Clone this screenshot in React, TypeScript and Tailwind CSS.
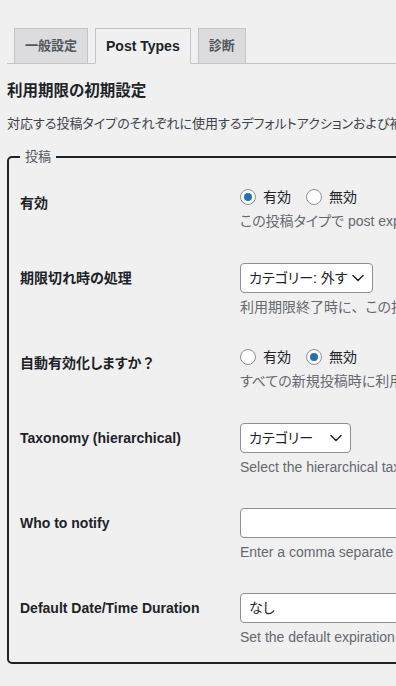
import React from "react";

const FONT = "font-['Liberation_Sans','Noto_Sans_CJK_JP',sans-serif] [font-feature-settings:'palt']";

function Full({ children }: { children: React.ReactNode }) {
  return <span className="[font-feature-settings:normal]">{children}</span>;
}

function Radio({ checked }: { checked: boolean }) {
  return (
    <span className="w-[16px] h-[16px] rounded-full border border-[#8c8f94] bg-white flex items-center justify-center shrink-0">
      {checked && <span className="w-[8px] h-[8px] rounded-full bg-[#2271b1]" />}
    </span>
  );
}

function RadioPair({ first }: { first: boolean }) {
  return (
    <div className="h-[20px] flex items-center text-[14px] text-[#1d2327]">
      <Radio checked={first} />
      <span className="ml-[7px] mr-[15px]">有効</span>
      <Radio checked={!first} />
      <span className="ml-[7px]">無効</span>
    </div>
  );
}

function Chevron() {
  return (
    <svg width="12" height="8" viewBox="0 0 12 8" className="shrink-0">
      <polyline points="1,1.5 6,6.5 11,1.5" fill="none" stroke="#1d2327" strokeWidth="1.5" strokeLinejoin="round" strokeLinecap="round" />
    </svg>
  );
}

function FakeSelect({ label, w }: { label: string; w: string }) {
  return (
    <div className={`${w} h-[30px] border border-[#8c8f94] rounded-[4px] bg-white flex items-center justify-between pl-[8px] pr-[8px] text-[14px] text-[#1d2327]`}>
      <span className="whitespace-nowrap">{label}</span>
      <Chevron />
    </div>
  );
}

function Desc({ children }: { children: React.ReactNode }) {
  return <div className="mt-[4px] leading-[20px] text-[14px] text-[#646970] whitespace-nowrap">{children}</div>;
}

function Row({ label, children, radio, last }: { label: React.ReactNode; children: React.ReactNode; radio?: boolean; last?: boolean }) {
  return (
    <div className="flex">
      <div className="w-[220px] shrink-0 pt-[20px] leading-[18px] text-[14px] font-bold text-[#1d2327] whitespace-nowrap">{label}</div>
      <div className={`${radio ? "pt-[13px] pb-[18px]" : last ? "pt-[14px] pb-[15px]" : "pt-[14px] pb-[17px]"}`}>{children}</div>
    </div>
  );
}

export default function App() {
  return (
    <div className={`w-[396px] h-[686px] overflow-hidden bg-[#f0f0f1] ${FONT}`}>
      <div className="w-[900px] pt-[28px]">
        <div className="ml-[7px] flex items-end border-b border-[#c3c4c7]">
          <div className="ml-[7px] -mb-px px-[10px] py-[5px] leading-[24px] border border-[#c3c4c7] bg-[#dcdcde] text-[13px] font-bold text-[#50575e]">一般設定</div>
          <div className="ml-[7px] -mb-px px-[10px] py-[5px] leading-[24px] border border-[#c3c4c7] border-b-[#f0f0f1] bg-[#f0f0f1] text-[14px] font-bold text-[#1d2327]">Post Types</div>
          <div className="ml-[7px] -mb-px px-[10px] py-[5px] leading-[24px] border border-[#c3c4c7] bg-[#dcdcde] text-[13px] font-bold text-[#50575e]">診断</div>
        </div>

        <div className="pl-[7px]">
          <h2 className="mt-[16px] text-[15.5px] leading-[22px] font-bold text-[#1d2327]">利用期限の初期設定</h2>
          <p className="mt-[12px] text-[13px] leading-[20px] text-[#3c434a] whitespace-nowrap">
            対応する投稿タイプのそれぞれに使用するデフォルトアクションおよび補足設定を選択します。
          </p>

          <fieldset className="mt-[13px] w-[760px] border-2 border-[#1d2327] rounded-[5px] pl-[11px] pt-[7px] pb-0">
            <legend className="px-[5px] text-[13px] leading-[20px] text-[#50575e]">投稿</legend>

            <Row label="有効" radio>
              <RadioPair first />
              <Desc>この投稿タイプで post expirator を有効にするかどうかを選択します。</Desc>
            </Row>

            <Row label="期限切れ時の処理">
              <FakeSelect label="カテゴリー: 外す" w="w-[133px]" />
              <Desc>
                利用期限終了時に<Full>、</Full>この投稿タイプのデフォルトアクションを選択します。
              </Desc>
            </Row>

            <Row label={<>自動有効化しますか<Full>？</Full></>} radio>
              <RadioPair first={false} />
              <Desc>すべての新規投稿時に利用期限を自動的に有効にするかどうかを選択します。</Desc>
            </Row>

            <Row label="Taxonomy (hierarchical)">
              <FakeSelect label="カテゴリー" w="w-[111px]" />
              <Desc>Select the hierarchical taxonomy to be used for term based expiration.</Desc>
            </Row>

            <Row label="Who to notify">
              <div className="w-[350px] h-[30px] border border-[#8c8f94] rounded-[4px] bg-white" />
              <Desc>Enter a comma separate list of emails that you would like to be notified when the post expires.</Desc>
            </Row>

            <Row label="Default Date/Time Duration" last>
              <div className="w-[350px] h-[30px] border border-[#8c8f94] rounded-[4px] bg-white flex items-center pl-[8px] text-[14px] text-[#1d2327]">なし</div>
              <Desc>Set the default expiration date to be used when creating a new post of this type.</Desc>
            </Row>
          </fieldset>
        </div>
      </div>
    </div>
  );
}
